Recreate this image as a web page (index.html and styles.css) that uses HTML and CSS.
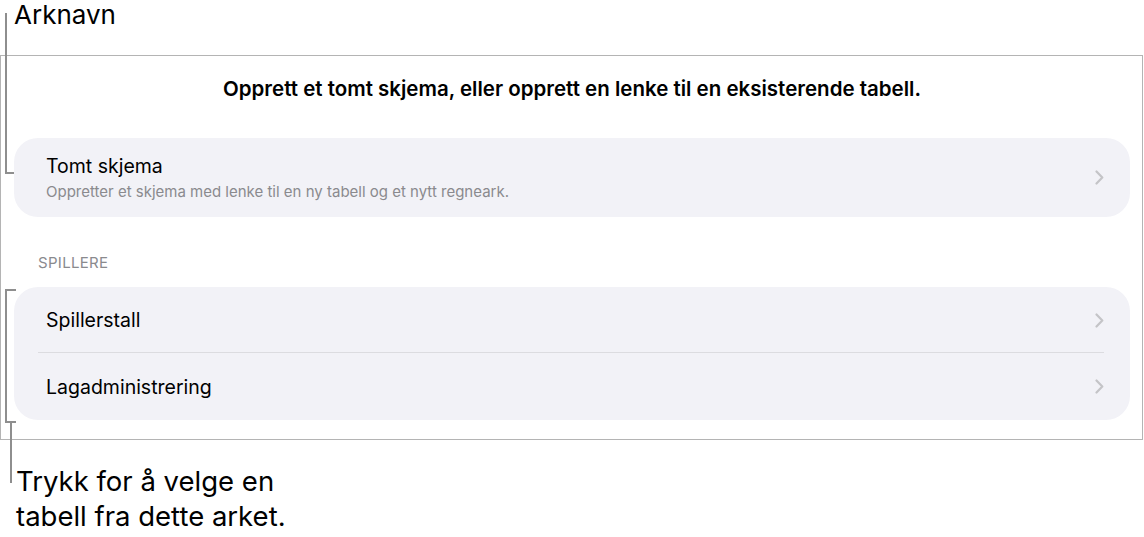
FILE: index.html
```html
<!DOCTYPE html>
<html lang="nb">
<head>
<meta charset="UTF-8">
<title>Skjema</title>
<link rel="stylesheet" href="styles.css">
</head>
<body>
<div class="page">
    <div class="callout callout-top">Arknavn</div>

    <div class="sheet">
        <h2 class="sheet-title">Opprett et tomt skjema, eller opprett en lenke til en eksisterende tabell.</h2>

        <div class="group">
            <div class="row row-tall">
                <div class="row-text">
                    <div class="row-label">Tomt skjema</div>
                    <div class="row-sub">Oppretter et skjema med lenke til en ny tabell og et nytt regneark.</div>
                </div>
                <svg class="chevron" width="9" height="15" viewBox="0 0 9 15"><path d="M1.5 1.5 L7.3 7.5 L1.5 13.5" fill="none" stroke="#c4c4c7" stroke-width="2.2" stroke-linecap="round" stroke-linejoin="round"/></svg>
            </div>
        </div>

        <div class="section-head">SPILLERE</div>

        <div class="group">
            <div class="row">
                <div class="row-label">Spillerstall</div>
                <svg class="chevron" width="9" height="15" viewBox="0 0 9 15"><path d="M1.5 1.5 L7.3 7.5 L1.5 13.5" fill="none" stroke="#c4c4c7" stroke-width="2.2" stroke-linecap="round" stroke-linejoin="round"/></svg>
            </div>
            <div class="row">
                <div class="row-label">Lagadministrering</div>
                <svg class="chevron" width="9" height="15" viewBox="0 0 9 15"><path d="M1.5 1.5 L7.3 7.5 L1.5 13.5" fill="none" stroke="#c4c4c7" stroke-width="2.2" stroke-linecap="round" stroke-linejoin="round"/></svg>
            </div>
        </div>
    </div>

    <div class="callout callout-bottom">Trykk for å velge en<br>tabell fra dette arket.</div>

    <!-- leader lines -->
    <div class="leader leader-top"></div>
    <div class="leader leader-group"></div>
    <div class="leader leader-stem"></div>
</div>
</body>
</html>
```

FILE: styles.css
```css
body {
  margin: 0;
  background-color: #fff;
  color: #000;
  font-family: 'Inter', 'Roboto', sans-serif;
}

.page {
  position: relative;
  width: 1144px;
  height: 537px;
  overflow: hidden;
}

.callout {
  font-weight: 400;
}

.callout-top {
  height: 55px;
  padding-left: 14px;
  font-size: 26px;
  line-height: 30px;
}

.sheet {
  width: 1143px;
  box-sizing: border-box;
  border: 1px solid #b4b4b4;
  padding: 0 12px 19px 13px;
}

.sheet-title {
  margin: 0;
  padding: 20px 0 36px;
  text-align: center;
  font-size: 20.5px;
  font-weight: 600;
  line-height: 26px;
}

.group {
  background-color: #f2f2f7;
  border-radius: 24px;
  padding: 0 26px 0 24px;
}

.row {
  display: flex;
  align-items: center;
  justify-content: space-between;
  height: 66px;
  padding-left: 8px;
}

.row + .row {
  border-top: 1px solid #dcdce0;
  height: 67px;
  margin-top: -1px;
}

.row-tall {
  height: 79px;
}

.row-label {
  font-size: 19.5px;
  line-height: 24px;
}

.row-sub {
  margin-top: 5px;
  font-size: 15px;
  line-height: 18px;
  color: #8a8a8e;
}

.section-head {
  padding: 37px 0 15px 24px;
  font-size: 15px;
  line-height: 18px;
  letter-spacing: 0.3px;
  color: #8a8a8e;
}

.callout-bottom {
  padding: 24px 0 0 16px;
  font-size: 27.5px;
  line-height: 35px;
}

.leader {
  position: absolute;
  border-color: #8e8e8e;
  border-style: solid;
  border-width: 0;
}

.leader-top {
  left: 5px;
  top: 13px;
  width: 7px;
  height: 159px;
  border-left-width: 2px;
  border-bottom-width: 2px;
}

.leader-group {
  left: 5px;
  top: 289px;
  width: 9px;
  height: 130px;
  border-left-width: 2px;
  border-top-width: 2px;
  border-bottom-width: 2px;
}

.leader-stem {
  left: 10px;
  top: 421px;
  width: 2px;
  height: 62px;
  background-color: #8e8e8e;
}
```
